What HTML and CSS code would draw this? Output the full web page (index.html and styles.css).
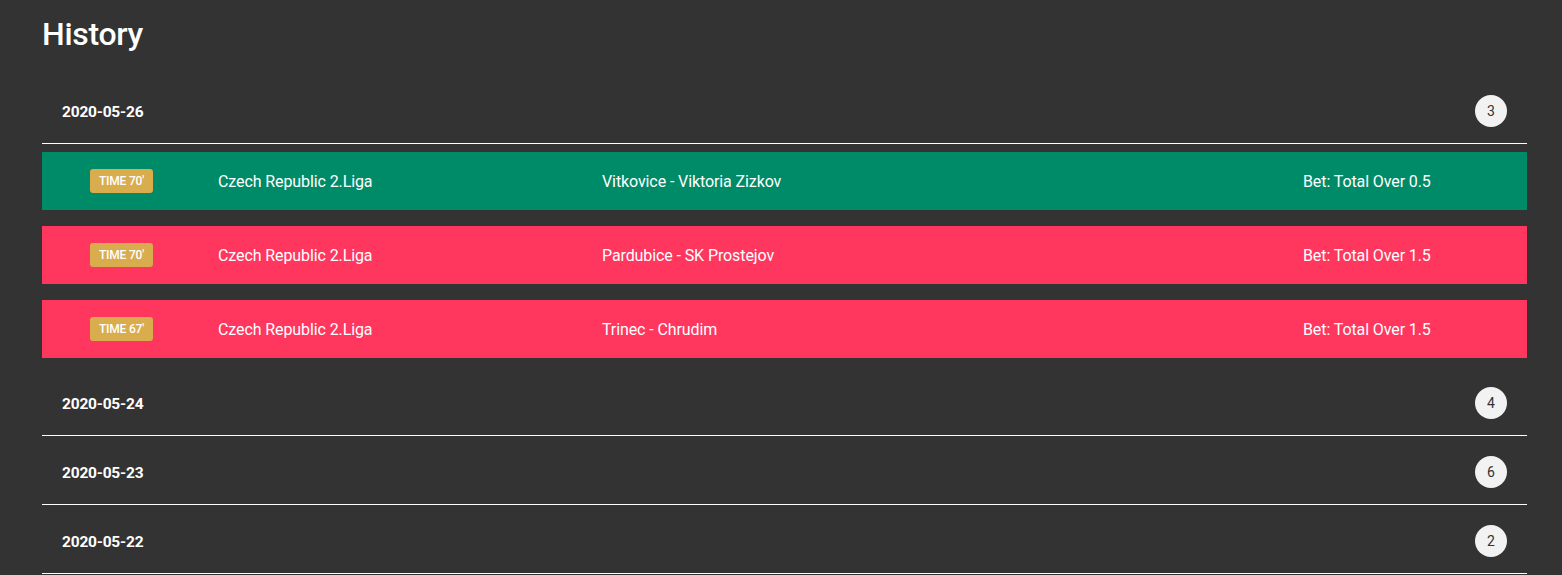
FILE: index.html
```html
<!DOCTYPE html>
<html lang="en">
<head>
  <meta charset="UTF-8" />
  <meta name="viewport" content="width=device-width, initial-scale=1.0"/>
  <title>History</title>
  <link rel="stylesheet" href="styles.css">
</head>
<body>

  <div class="page">
    <h1 class="title">History</h1>

    <div class="day">
      <div class="day-head">
        <span class="day-date">2020-05-26</span>
        <span class="day-count">3</span>
      </div>
      <div class="day-list">
        <div class="bet win">
          <div class="bet-time"><span class="badge">Time 70'</span></div>
          <div>Czech Republic 2.Liga</div>
          <div>Vitkovice - Viktoria Zizkov</div>
          <div>Bet: Total Over 0.5</div>
        </div>
        <div class="bet lose">
          <div class="bet-time"><span class="badge">Time 70'</span></div>
          <div>Czech Republic 2.Liga</div>
          <div>Pardubice - SK Prostejov</div>
          <div>Bet: Total Over 1.5</div>
        </div>
        <div class="bet lose">
          <div class="bet-time"><span class="badge">Time 67'</span></div>
          <div>Czech Republic 2.Liga</div>
          <div>Trinec - Chrudim</div>
          <div>Bet: Total Over 1.5</div>
        </div>
      </div>
    </div>

    <div class="day">
      <div class="day-head">
        <span class="day-date">2020-05-24</span>
        <span class="day-count">4</span>
      </div>
    </div>

    <div class="day">
      <div class="day-head">
        <span class="day-date">2020-05-23</span>
        <span class="day-count">6</span>
      </div>
    </div>

    <div class="day">
      <div class="day-head">
        <span class="day-date">2020-05-22</span>
        <span class="day-count">2</span>
      </div>
    </div>
  </div>

</body>
</html>
```

FILE: styles.css
```css
body {
  margin: 0;
  padding: 0;
  background: #333333;
  color: #fff;
  font-family: Roboto, 'Liberation Sans', sans-serif;
  overflow: hidden;
}

.page {
  padding: 0 35px 0 42px;
}

.title {
  margin: 0;
  padding-top: 15px;
  font-size: 32px;
  font-weight: 500;
  line-height: 38px;
  letter-spacing: -0.3px;
  height: 60px;
}

.day-head {
  display: flex;
  align-items: center;
  justify-content: space-between;
  height: 68px;
  padding: 0 20px;
  border-bottom: 1px solid #fff;
}

.day-date {
  font-size: 15.5px;
  font-weight: 700;
  letter-spacing: -0.2px;
  padding-top: 6px;
}

.day-count {
  width: 32px;
  height: 32px;
  border-radius: 50%;
  background: #f2f2f2;
  color: #333;
  font-size: 14px;
  font-weight: 400;
  display: flex;
  align-items: center;
  justify-content: center;
  margin-top: 4px;
}

.day-list {
  padding: 8px 0 9px;
  display: flex;
  flex-direction: column;
  gap: 16px;
}

.bet {
  display: grid;
  grid-template-columns: 176px 384px 701px 1fr;
  align-items: center;
  height: 58px;
  font-size: 16px;
  letter-spacing: -0.1px;
}

.win {
  background: #008b68;
}

.lose {
  background: #ff365e;
}

.bet-time {
  padding-left: 48px;
}

.badge {
  display: inline-block;
  width: 63px;
  height: 24px;
  line-height: 24px;
  text-align: center;
  border-radius: 3px;
  background: #d9ad4e;
  font-size: 12px;
  font-weight: 500;
  letter-spacing: -0.2px;
  text-transform: uppercase;
}
```
